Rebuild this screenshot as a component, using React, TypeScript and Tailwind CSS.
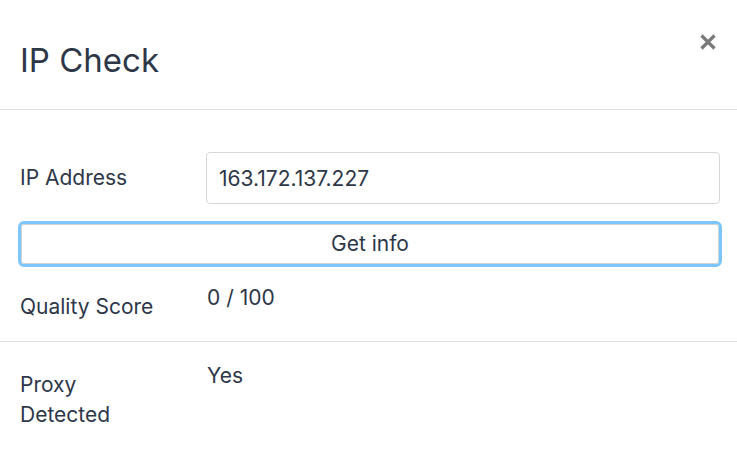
import { useState } from 'react'

export default function App() {
  const [ip, setIp] = useState('163.172.137.227')

  return (
    <div className="w-[737px] h-[455px] bg-white text-[#2d3748] overflow-hidden" style={{ fontFamily: 'Inter, "Noto Sans", sans-serif' }}>
      <div className="h-[110px] border-b border-[#dcdfe3] flex items-start justify-between pl-5 pr-[21px]">
        <h1 className="text-[33px] mt-[40px] leading-[40px] font-normal">IP Check</h1>
        <button className="mt-[34px] text-[#7a7a7a]" aria-label="Close">
          <svg width="16" height="16" viewBox="0 0 16 16" fill="none" stroke="currentColor" strokeWidth="3.2" strokeLinecap="butt">
            <path d="M1.5 1.5 L14.5 14.5 M14.5 1.5 L1.5 14.5" />
          </svg>
        </button>
      </div>

      <div className="pl-[18px] pr-[15px] pt-[42px]">
        <div className="flex items-center">
          <label className="w-[188px] pl-[2px] text-[21px]">IP Address</label>
          <input
            value={ip}
            onChange={(e) => setIp(e.target.value)}
            className="flex-1 h-[52px] border border-[#d5d8dc] rounded-[4px] px-3 text-[21px] mr-[2px] outline-none"
          />
        </div>
        <button className="mt-[17px] w-full h-[46px] rounded-[6px] border-[3px] border-[#7cc6fb] text-[21px] shadow-[inset_0_0_0_1px_#cfd3d8]">
          Get info
        </button>
        <div className="flex pt-[16px] pb-[19px] text-[21px] leading-[30px]">
          <div className="w-[188px] pl-[2px] pt-[9px]">Quality Score</div>
          <div className="pl-[1px]">0 / 100</div>
        </div>
      </div>
      <div className="border-t border-[#dcdfe3]" />
      <div className="px-5 pt-[19px] flex text-[21px] leading-[30px]">
        <div className="w-[186px] pt-[9px]">Proxy<br />Detected</div>
        <div className="pl-[1px]">Yes</div>
      </div>
    </div>
  )
}
